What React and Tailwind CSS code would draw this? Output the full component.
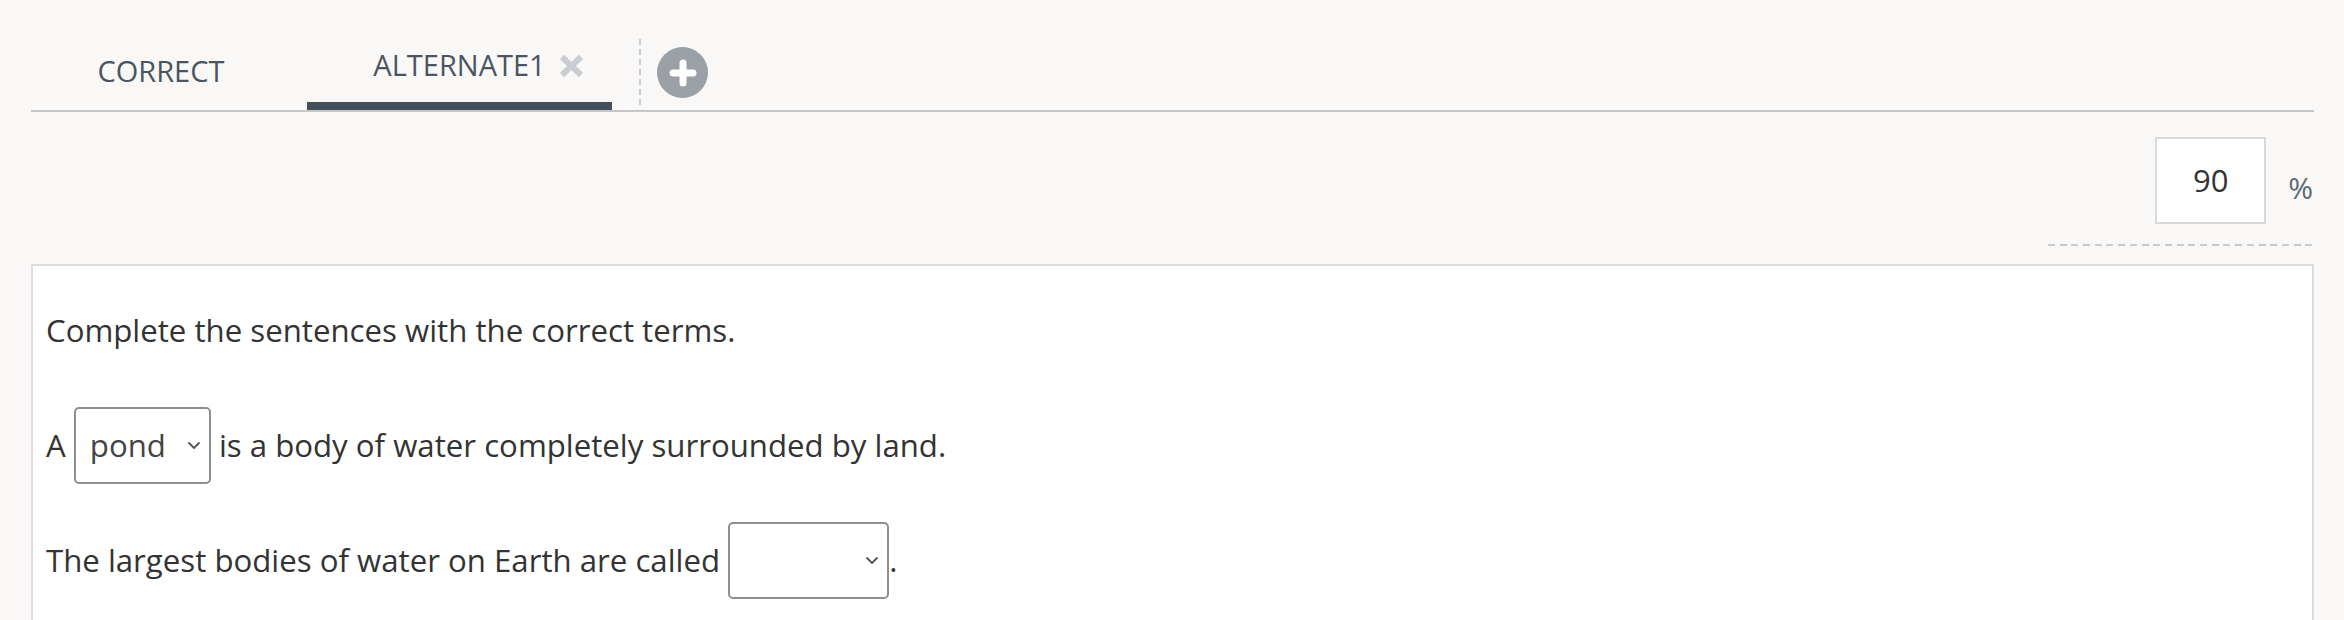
import React from "react";

function Chevron() {
  return (
    <svg width="14" height="9" viewBox="0 0 14 9" className="block">
      <path d="M2 2 L7 7 L12 2" fill="none" stroke="#555" strokeWidth="1.8" strokeLinecap="round" strokeLinejoin="round" />
    </svg>
  );
}

function SelectBox({ width, value }) {
  return (
    <div
      className="flex h-[77px] items-center justify-between rounded-[5px] border-2 border-[#8e8e8e] bg-white pl-[14px] pr-[8px]"
      style={{ width }}
    >
      <span className="text-[31.2px] leading-[45px] text-[#444]">{value}</span>
      <Chevron />
    </div>
  );
}

export default function App() {
  return (
    <div className="min-h-[620px] bg-[#f9f8f6] pl-[31px] pr-[30px] font-['Open_Sans',sans-serif]">
      {/* Tabs */}
      <div className="flex h-[112px] items-stretch border-b-2 border-[#c4c6c8]">
        <div className="flex w-[260px] items-end justify-center pb-[25px]">
          <span className="text-[29px] leading-[28px] text-[#4a5561]">CORRECT</span>
        </div>
        <div className="ml-[16px] flex w-[305px] items-end justify-center border-b-[8px] border-[#454f5a] pb-[23px]">
          <span className="relative text-[29px] leading-[28px] text-[#4a5561]">
            ALTERNATE1
            <svg
              className="absolute left-[calc(100%+13px)] top-[4px]"
              width="25"
              height="22"
              viewBox="0 0 25 22"
            >
              <path d="M3 2 L22 20 M22 2 L3 20" stroke="#c9ccd0" strokeWidth="6" strokeLinecap="butt" />
            </svg>
          </span>
        </div>
        <div className="ml-[27px] mt-[39px] h-[66px] w-[2px] bg-[repeating-linear-gradient(to_bottom,#c8ccd0_0_6px,transparent_6px_10px)]" />
        <div className="ml-[16px] mt-[47px] flex h-[51px] w-[51px] items-center justify-center rounded-full bg-[#9aa0a6]">
          <svg width="28" height="28" viewBox="0 0 28 28">
            <path d="M14 4 V24 M4 14 H24" stroke="#fff" strokeWidth="7" strokeLinecap="round" />
          </svg>
        </div>
      </div>

      {/* Percent */}
      <div className="mt-[25px] flex items-center justify-end">
        <div className="flex h-[87px] w-[111px] items-center justify-center border-2 border-[#d9d9d9] bg-white">
          <span className="text-[31px] leading-[45px] text-[#333]">90</span>
        </div>
        <span className="ml-[22px] mr-[1px] mt-[14px] text-[30px] leading-[45px] text-[#5b6873]">%</span>
      </div>
      <div className="ml-auto mt-[20px] h-[2px] w-[266px] bg-[repeating-linear-gradient(to_right,#c6c9cd_0_7px,transparent_7px_11.7px)]" />

      {/* Content */}
      <div className="mt-[18px] min-h-[400px] border-2 border-[#dcdcdc] bg-white pl-[13px] pt-[42px] text-[31.2px] leading-[45px] text-[#333]">
        <div>Complete the sentences with the correct terms.</div>
        <div className="mt-[54px] flex h-[77px] items-center whitespace-pre">
          <span>A </span>
          <SelectBox width={137} value="pond" />
          <span> is a body of water completely surrounded by land.</span>
        </div>
        <div className="mt-[38px] flex h-[77px] items-center whitespace-pre">
          <span>The largest bodies of water on Earth are called </span>
          <SelectBox width={161} value="" />
          <span>.</span>
        </div>
      </div>
    </div>
  );
}
